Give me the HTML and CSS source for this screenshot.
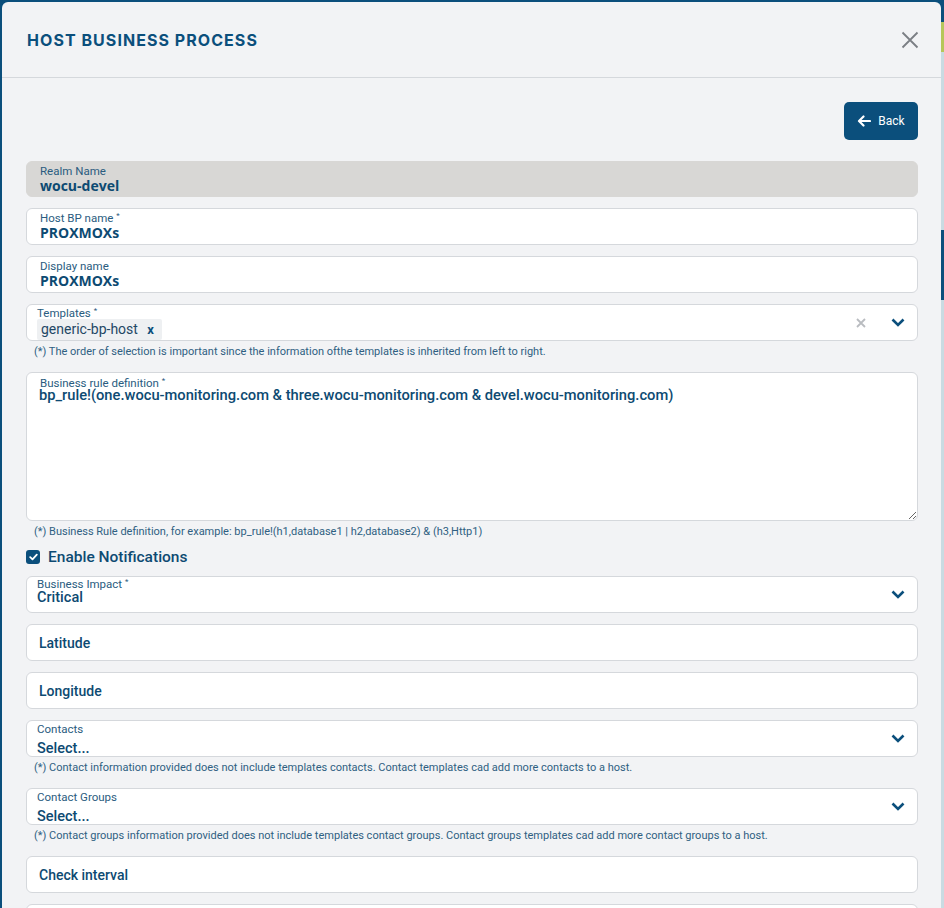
FILE: index.html
```html
<!DOCTYPE html>
<html>
<head>
<meta charset="utf-8">
<link rel="stylesheet" href="styles.css">
</head>
<body>
<div class="backdrop">
  <div class="modal">
    <header class="modal-header">
      <h1 class="modal-title">HOST BUSINESS PROCESS</h1>
      <button class="close-btn" aria-label="Close">
        <svg width="18" height="18" viewBox="0 0 18 18"><path d="M1.5 1.5 L16.5 16.5 M16.5 1.5 L1.5 16.5" stroke="#7b7f84" stroke-width="1.8" fill="none"/></svg>
      </button>
    </header>
    <div class="modal-body">
      <div class="actions">
        <button class="back-btn">
          <svg width="14" height="12" viewBox="0 0 14 12"><path d="M13 6 H2.5 M6.5 1.5 L2 6 L6.5 10.5" stroke="#fff" stroke-width="2.2" fill="none" stroke-linecap="round" stroke-linejoin="round"/></svg>
          <span>Back</span>
        </button>
      </div>

      <div class="field field-disabled">
        <div class="label">Realm Name</div>
        <div class="value">wocu-devel</div>
      </div>
      <div class="field">
        <div class="label">Host BP name <sup>*</sup></div>
        <div class="value">PROXMOXs</div>
      </div>
      <div class="field">
        <div class="label">Display name</div>
        <div class="value">PROXMOXs</div>
      </div>
      <div class="field select-field with-help">
        <div class="select-main">
          <div class="label sel-label">Templates <sup>*</sup></div>
          <div class="chips"><span class="chip">generic-bp-host <b class="chip-x">x</b></span></div>
        </div>
        <span class="clear-x">
          <svg width="10" height="10" viewBox="0 0 10 10"><path d="M1 1 L9 9 M9 1 L1 9" stroke="#b9bcc0" stroke-width="1.8" fill="none"/></svg>
        </span>
        <span class="chev">
          <svg width="14" height="9" viewBox="0 0 14 9"><path d="M1.5 1.5 L7 7 L12.5 1.5" stroke="#0b4f7c" stroke-width="2.6" fill="none"/></svg>
        </span>
      </div>
      <p class="help">(*) The order of selection is important since the information ofthe templates is inherited from left to right.</p>

      <div class="field textarea-field with-help">
        <div class="label">Business rule definition <sup>*</sup></div>
        <textarea class="ta">bp_rule!(one.wocu-monitoring.com &amp; three.wocu-monitoring.com &amp; devel.wocu-monitoring.com)</textarea>
      </div>
      <p class="help help-tight">(*) Business Rule definition, for example: bp_rule!(h1,database1 | h2,database2) &amp; (h3,Http1)</p>

      <label class="check-row">
        <span class="checkbox">
          <svg width="9" height="8" viewBox="0 0 9 8"><path d="M1.2 4.2 L3.5 6.3 L7.8 1.6" stroke="#fff" stroke-width="1.8" fill="none" stroke-linecap="round" stroke-linejoin="round"/></svg>
        </span>
        <span class="check-text">Enable Notifications</span>
      </label>

      <div class="field select-field">
        <div class="select-main tight">
          <div class="label sel-label">Business Impact <sup>*</sup></div>
          <div class="value sel-value">Critical</div>
        </div>
        <span class="chev">
          <svg width="14" height="9" viewBox="0 0 14 9"><path d="M1.5 1.5 L7 7 L12.5 1.5" stroke="#0b4f7c" stroke-width="2.6" fill="none"/></svg>
        </span>
      </div>

      <div class="field plain-field"><span class="plain-label">Latitude</span></div>
      <div class="field plain-field"><span class="plain-label">Longitude</span></div>

      <div class="field select-field with-help">
        <div class="select-main">
          <div class="label sel-label">Contacts</div>
          <div class="value sel-value placeholder">Select...</div>
        </div>
        <span class="chev">
          <svg width="14" height="9" viewBox="0 0 14 9"><path d="M1.5 1.5 L7 7 L12.5 1.5" stroke="#0b4f7c" stroke-width="2.6" fill="none"/></svg>
        </span>
      </div>
      <p class="help">(*) Contact information provided does not include templates contacts. Contact templates cad add more contacts to a host.</p>

      <div class="field select-field with-help">
        <div class="select-main">
          <div class="label sel-label">Contact Groups</div>
          <div class="value sel-value placeholder">Select...</div>
        </div>
        <span class="chev">
          <svg width="14" height="9" viewBox="0 0 14 9"><path d="M1.5 1.5 L7 7 L12.5 1.5" stroke="#0b4f7c" stroke-width="2.6" fill="none"/></svg>
        </span>
      </div>
      <p class="help">(*) Contact groups information provided does not include templates contact groups. Contact groups templates cad add more contact groups to a host.</p>

      <div class="field plain-field"><span class="plain-label">Check interval</span></div>
      <div class="field plain-field"></div>
    </div>
  </div>
</div>
</body>
</html>
```
FILE: styles.css
```css
* { box-sizing: border-box; }
html, body { margin: 0; padding: 0; }
body {
  width: 944px;
  height: 908px;
  overflow: hidden;
  font-family: Roboto, "Liberation Sans", sans-serif;
  background:
    linear-gradient(to bottom, #0b4f7c 0, #0b4f7c 22px, #b6c65a 22px, #b6c65a 52px, #c9dbe2 52px, #c9dbe2 230px, #0b4f7c 230px, #0b4f7c 300px, #c9dbe2 300px) right top / 3px 100% no-repeat,
    #0b4f7c;
}
.backdrop { padding: 2px 3px 0 2px; }
.modal {
  background: #f2f3f5;
  border-radius: 6px 6px 0 0;
  height: 906px;
  overflow: hidden;
}
.modal-header {
  height: 76px;
  border-bottom: 1px solid #d5d8dc;
  display: flex;
  align-items: center;
  justify-content: space-between;
  padding: 0 22px 0 25px;
}
.modal-title {
  margin: 0;
  font-family: Inter, "Open Sans", sans-serif;
  font-weight: 700;
  font-size: 16px;
  letter-spacing: 1.05px;
  color: #0b4f7c;
}
.close-btn {
  border: 0;
  background: transparent;
  padding: 0;
  width: 18px;
  height: 18px;
  display: flex;
}
.modal-body { padding: 24px 23px 0 24px; }
.actions { display: flex; justify-content: flex-end; margin-bottom: 21px; }
.back-btn {
  height: 38px;
  width: 74px;
  border: 0;
  border-radius: 5px;
  background: #0b4f7c;
  color: #fff;
  display: flex;
  align-items: center;
  justify-content: center;
  gap: 7px;
  font-family: Roboto, sans-serif;
  font-size: 12px;
  padding: 0;
}
.field {
  height: 37px;
  background: #fff;
  border: 1px solid #d5d8dc;
  border-radius: 6px;
  margin-bottom: 11px;
  padding: 2px 12px 0 13px;
}
.field.with-help { margin-bottom: 0; }
.field-disabled { background: #d8d7d5; border-color: #d8d7d5; height: 36px; padding-top: 2px; }
.label {
  font-size: 11.5px;
  line-height: 14px;
  color: #2a5c80;
}
.label sup { font-size: 8px; vertical-align: top; position: relative; top: -2px; }
.value {
  font-size: 14px;
  line-height: 16px;
  font-weight: 700;
  color: #0d4a72;
  font-family: "Open Sans", Roboto, sans-serif;
}
.select-field {
  display: flex;
  align-items: center;
  padding: 0 0 0 10px;
}
.select-main { flex: 1; display: flex; flex-direction: column; align-self: stretch; padding-top: 2px; }
.select-main.tight { padding-top: 1px; }
.sel-label { line-height: 12px; }
.chips { display: flex; }
.chip {
  background: #eef0f2;
  border-radius: 2px;
  font-size: 14px;
  line-height: 20px;
  color: #1f4866;
  padding: 0 8px 0 4px;
  font-family: Roboto, sans-serif;
}
.chip-x { margin-left: 6px; color: #0b4f7c; font-size: 13px; }
.sel-value { font-family: Roboto, sans-serif; font-weight: 500; font-size: 14.5px; line-height: 15px; }
.placeholder { margin-top: 6px; }
.clear-x { width: 36px; display: flex; justify-content: center; margin-right: 1px; }
.chev { width: 37px; display: flex; justify-content: center; padding-right: 2px; }
.help {
  margin: 5px 0 14px 8px;
  font-size: 11px;
  line-height: 12px;
  color: #2f5f82;
}
.help-tight { margin-bottom: 8px; }
.textarea-field {
  height: 149px;
  display: flex;
  flex-direction: column;
  padding: 4px 0 0 12px;
}
.textarea-field .label { line-height: 12px; padding-left: 1px; }
.ta {
  flex: 1;
  border: 0;
  outline: 0;
  padding: 0;
  margin: -2px 0 0 0;
  resize: vertical;
  font-family: Roboto, sans-serif;
  font-weight: 500;
  font-size: 14.7px;
  line-height: 16px;
  color: #0d4a72;
  background: transparent;
  border-radius: 0 0 6px 0;
}
.check-row {
  display: flex;
  align-items: center;
  gap: 8px;
  height: 22px;
  margin: 0 0 8px;
}
.checkbox {
  width: 14px;
  height: 14px;
  background: #0b4f7c;
  border-radius: 3px;
  display: flex;
  align-items: center;
  justify-content: center;
}
.check-text {
  font-size: 15.5px;
  font-weight: 500;
  color: #0d4a72;
}
.plain-field { display: flex; align-items: center; padding: 0 12px; }
.plain-label { font-size: 14px; font-weight: 500; color: #0d4a72; }
```
